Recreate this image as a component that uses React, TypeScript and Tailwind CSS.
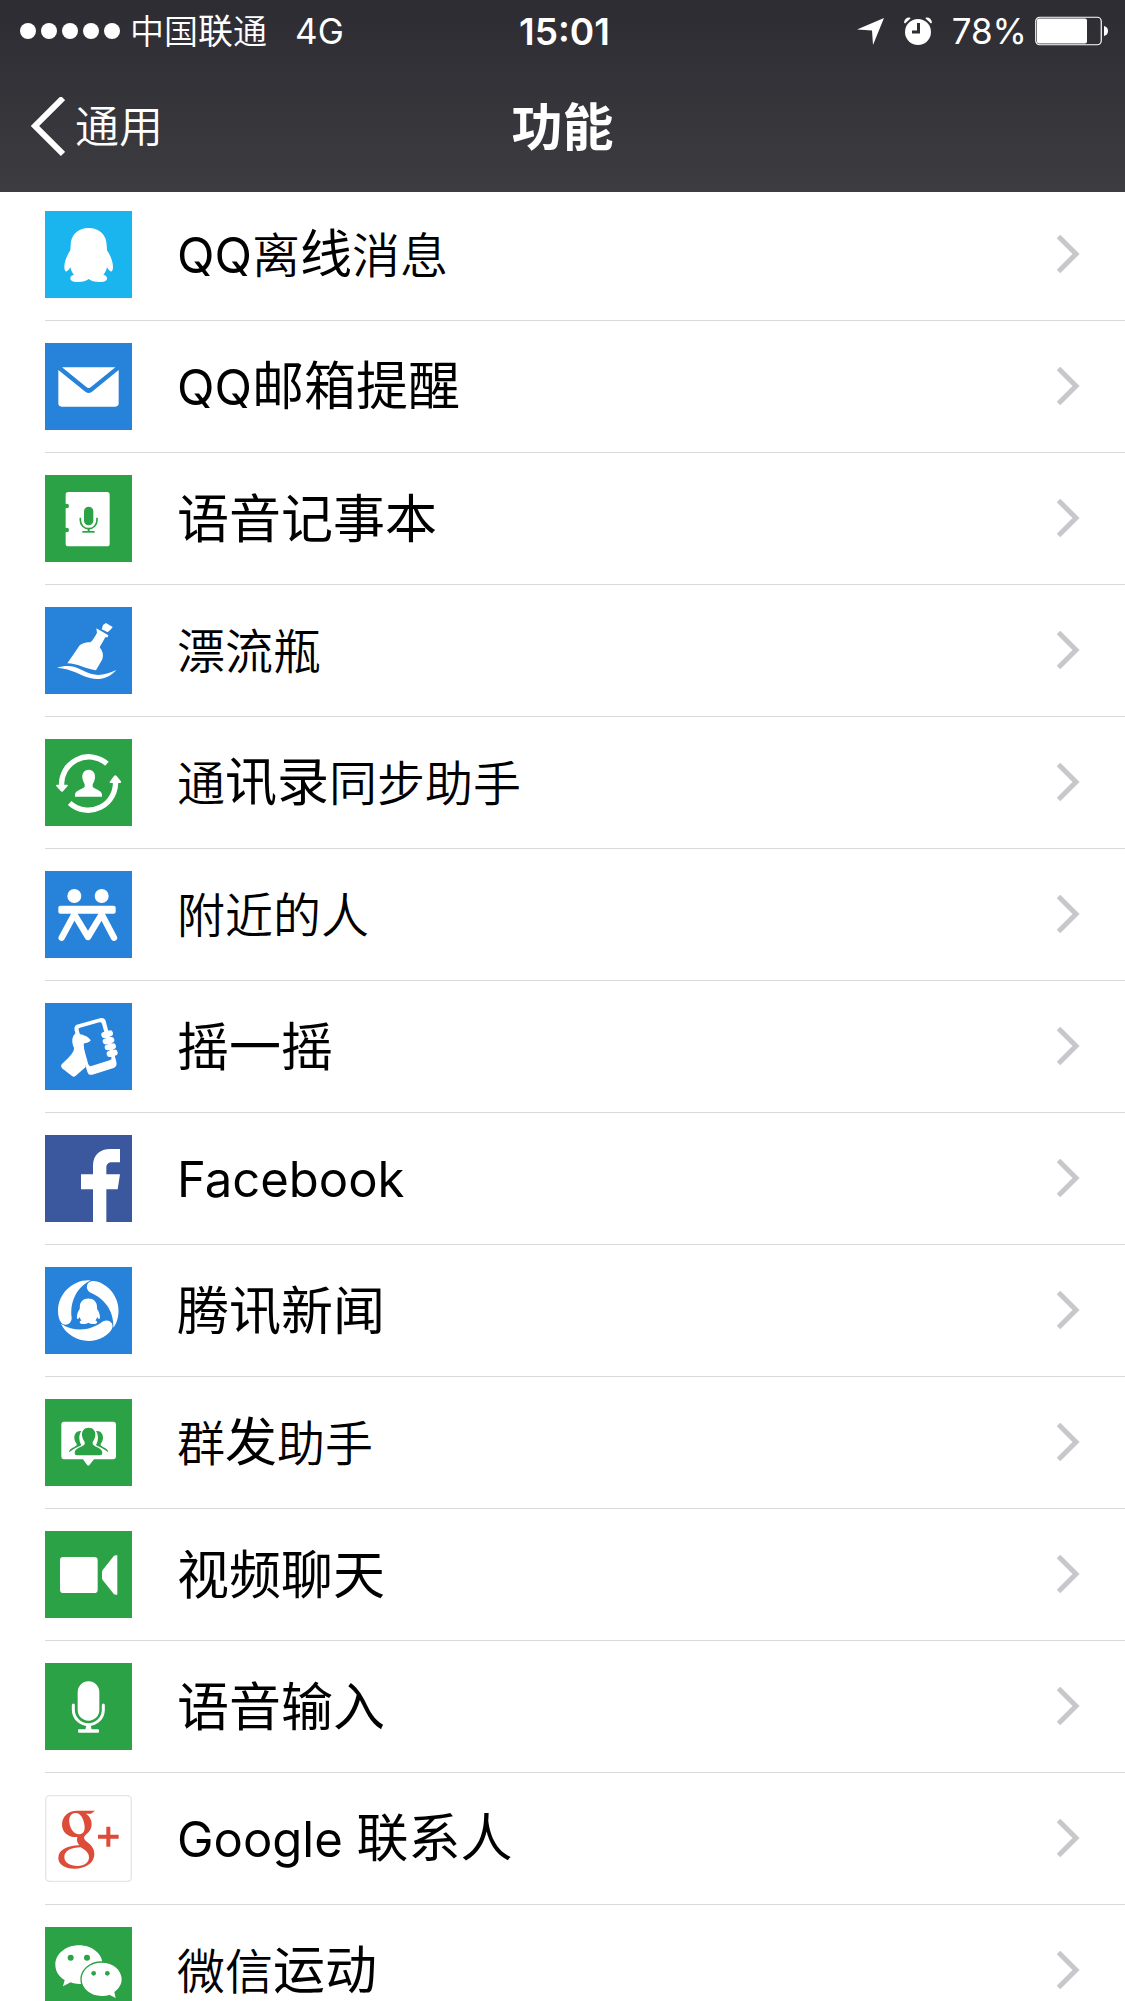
import React from 'react'
import { clsx } from 'clsx'

const BLUE = '#2782d9'
const GREEN = '#2ba245'

const PENGUIN =
  'M131 51C99 51 77 72 77 102L76 118C66 132 58 152 58 168C58 179 62 184 67 180C71 177 74 173 76 169C78 178 82 186 87 191C80 193 75 197 76 203C78 211 88 213 100 213C113 213 124 210 131 204C138 210 149 213 162 213C174 213 184 211 186 203C187 197 182 193 175 191C180 186 184 178 186 169C188 173 191 177 195 180C200 184 204 179 204 168C204 152 196 132 186 118L185 102C185 72 163 51 131 51Z'

const NEWS_BLADE = 'M137 40C86 36 39 78 39 131C39 148 43 160 49 167C57 178 80 174 80 152C75 112 88 66 137 40Z'

function Tile({ color, children }: { color: string; children: React.ReactNode }) {
  return (
    <svg viewBox="0 0 261 261" className="h-[87px] w-[87px] shrink-0" fill="#fff" aria-hidden="true">
      <rect width="261" height="261" fill={color} />
      {children}
    </svg>
  )
}

// Characters drawn a little smaller than the rest of the label
function Small({ children }: { children: React.ReactNode }) {
  return <span className="text-[48px] font-[350]">{children}</span>
}

function Latin({ children }: { children: React.ReactNode }) {
  return <span className="text-[49px]">{children}</span>
}

const features: { id: string; label: React.ReactNode; icon: React.ReactNode }[] = [
  {
    id: 'qq-offline',
    label: <><Latin>QQ</Latin><Small>离</Small>线<Small>消息</Small></>,
    icon: (
      <Tile color="#1ab4ef">
        <path d={PENGUIN} />
      </Tile>
    ),
  },
  {
    id: 'qq-mail',
    label: <><Latin>QQ</Latin>邮箱提醒</>,
    icon: (
      <Tile color={BLUE}>
        <path d="M51 73H211L138 132Q131 138 124 132Z" />
        <path d="M40 81L122 147Q131 153 140 147L221 81V181Q221 191 211 191H50Q40 191 40 181Z" />
      </Tile>
    ),
  },
  {
    id: 'voice-note',
    label: '语音记事本',
    icon: (
      <Tile color={GREEN}>
        <rect x="62" y="51" width="132" height="163" rx="8" />
        <g fill={GREEN}>
          <circle cx="65" cy="93" r="7" />
          <circle cx="65" cy="165" r="7" />
          <rect x="117" y="95" width="28" height="56" rx="14" />
          <rect x="128" y="160" width="6" height="11" />
          <rect x="112" y="168" width="37" height="5" />
        </g>
        <path d="M106 128V136A25 25 0 0 0 156 136V128" fill="none" stroke={GREEN} strokeWidth="5" />
      </Tile>
    ),
  },
  {
    id: 'bottle',
    label: <Small>漂流瓶</Small>,
    icon: (
      <Tile color={BLUE}>
        <path d="M183 48L203 60L198 67L188 76L170 67L174 54Z" />
        <path d="M154 64L190 85L188 91H181L164 121C174 133 176 145 172 157L153 190C120 186 98 169 67 169L99 122C106 110 118 106 136 106C143 100 150 89 156 77Z" />
        <path d="M36 182C64 173 88 176 112 190C150 211 178 206 214 189C196 211 165 221 138 214C108 207 82 185 36 182Z" />
      </Tile>
    ),
  },
  {
    id: 'contacts-sync',
    label: <><Small>通</Small>讯录<Small>同步助手</Small></>,
    icon: (
      <Tile color={GREEN}>
        <g fill="none" stroke="#fff" strokeWidth="16">
          <path d="M186 74A82 82 0 0 0 50 143" />
          <path d="M74 192A82 82 0 0 0 211 122" />
        </g>
        <path d="M36 137L66 137Q71 138 66 143L54 157Q51 160 48 157L34 142Q31 137 36 137Z" />
        <path d="M197 132Q191 131 196 126L207 111Q211 106 215 111L227 126Q231 131 225 132Z" />
        <path d="M131 92C117 92 111 103 112 116C113 125 117 131 119 136V143C112 152 91 153 90 166V173H171V166C170 153 150 152 143 143V136C146 131 149 125 150 116C151 103 145 92 131 92Z" />
      </Tile>
    ),
  },
  {
    id: 'nearby',
    label: <Small>附近的人</Small>,
    icon: (
      <Tile color={BLUE}>
        <circle cx="88" cy="75" r="21" />
        <circle cx="170" cy="75" r="21" />
        <rect x="40" y="104" width="172" height="24" rx="6" />
        <path d="M50 200L88 130L129 198L170 130L207 200" fill="none" stroke="#fff" strokeWidth="19" strokeLinecap="round" strokeLinejoin="round" />
      </Tile>
    ),
  },
  {
    id: 'shake',
    label: '摇一摇',
    icon: (
      <Tile color={BLUE}>
        <path d="M95 65L165 46Q178 43 182 54L214 176Q217 190 206 195L142 215Q131 218 127 206L89 83Q86 69 95 65Z" />
        <path d="M101 81Q99 75 105 74L163 58Q169 57 171 62L199 163Q201 170 194 172L139 189Q132 191 130 184Z" fill={BLUE} />
        <path d="M93 90C80 99 79 116 87 135C89 150 62 172 50 184Q45 190 51 196L82 220Q88 224 94 217L122 192L116 122C125 119 134 119 137 112C132 100 110 94 93 90Z" />
        <g fill="none" stroke="#fff" strokeWidth="18" strokeLinecap="round">
          <path d="M178 96L195 91" />
          <path d="M182 115L199 111" />
          <path d="M188 133L204 130" />
          <path d="M194 153L209 149" />
        </g>
      </Tile>
    ),
  },
  {
    id: 'facebook',
    label: <Latin>Facebook</Latin>,
    icon: (
      <Tile color="#3b579d">
        <path d="M144 261V163H108V118H144V92C144 60 165 42 196 42H225V82H201C190 82 184 88 184 98V118H225L218 163H184V261Z" />
      </Tile>
    ),
  },
  {
    id: 'tencent-news',
    label: '腾讯新闻',
    icon: (
      <Tile color={BLUE}>
        <path d={NEWS_BLADE} />
        <path d={NEWS_BLADE} transform="rotate(120 130 131)" />
        <path d={NEWS_BLADE} transform="rotate(240 130 131)" />
        <path d={PENGUIN} transform="translate(68 70) scale(0.475)" />
      </Tile>
    ),
  },
  {
    id: 'broadcast',
    label: <><Small>群</Small>发<Small>助手</Small></>,
    icon: (
      <Tile color={GREEN}>
        <path d="M57 68H204Q213 68 213 77V172Q213 181 204 181H147L134 197Q130 202 126 197L114 181H57Q49 181 49 172V77Q49 68 57 68Z" />
        <g fill={GREEN}>
          <path d="M109 96C96 94 88 103 88 116C88 124 92 130 95 134V139C89 146 72 148 72 160L82 153C90 146 106 142 109 138C101 124 101 108 109 96Z" />
          <path d="M153 96C166 94 174 103 174 116C174 124 170 130 167 134V139C173 146 190 148 190 160L180 153C172 146 156 142 153 138C161 124 161 108 153 96Z" />
          <path d="M131 86C117 86 110 96 111 109C112 119 116 125 119 129V136C112 146 89 146 89 162Q89 169 96 169H165Q172 169 172 162C172 146 150 146 143 136V129C146 125 150 119 151 109C152 96 145 86 131 86Z" />
        </g>
      </Tile>
    ),
  },
  {
    id: 'video-chat',
    label: '视频聊天',
    icon: (
      <Tile color={GREEN}>
        <rect x="45" y="78" width="113" height="108" rx="10" />
        <path d="M207 74Q211 72 217 73V191Q210 192 207 190L173 147Q171 144 171 140V124Q171 120 173 117Z" />
      </Tile>
    ),
  },
  {
    id: 'voice-input',
    label: '语音输入',
    icon: (
      <Tile color={GREEN}>
        <rect x="98" y="55" width="65" height="118" rx="32" />
        <path d="M85 126V140A45 45 0 0 0 175 140V126" fill="none" stroke="#fff" strokeWidth="9" strokeLinecap="round" />
        <path d="M124 187H137L140 200H121Z" />
        <rect x="99" y="199" width="63" height="10" rx="3" />
      </Tile>
    ),
  },
  {
    id: 'google-contacts',
    label: <><Latin>Google </Latin>联系人</>,
    icon: (
      <Tile color="#fff">
        <rect x="2" y="2" width="257" height="257" rx="12" fill="none" stroke="#e5e5e5" strokeWidth="4" />
        <g fill="#dd4b39" fillRule="evenodd">
          <path d="M96 47H150L138 56H123C134 63 140 74 140 87C140 105 129 113 121 121C115 127 116 132 122 137C134 146 148 157 148 177C148 203 124 221 88 221C60 221 40 209 40 189C40 165 66 152 103 151C97 144 94 136 97 126C69 128 51 111 51 89C51 65 69 47 96 47ZM91 54C78 55 71 66 73 82C75 103 88 119 103 118C117 117 121 105 118 88C115 68 105 53 91 54ZM107 157C78 157 58 168 58 186C58 202 74 213 98 213C119 213 132 203 132 187C132 173 120 165 107 157Z" />
          <path d="M184 95H196V119H221V131H196V155H184V131H159V119H184Z" />
        </g>
      </Tile>
    ),
  },
  {
    id: 'werun',
    label: <><Small>微信</Small>运动</>,
    icon: (
      <Tile color={GREEN}>
        <path d="M102 55C62 55 31 81 31 113C31 132 41 148 59 159L54 178L77 166C85 169 94 171 102 171C142 171 173 145 173 113C173 81 142 55 102 55Z" />
        <path d="M170 107C136 107 110 129 110 157C110 185 136 207 170 207C178 207 186 206 193 203L212 213L208 195C221 186 230 172 230 157C230 129 204 107 170 107Z" stroke={GREEN} strokeWidth="8" paintOrder="stroke" />
        <g fill={GREEN}>
          <circle cx="77" cy="92" r="9" />
          <circle cx="126" cy="92" r="9" />
          <circle cx="146" cy="139" r="7" />
          <circle cx="187" cy="139" r="7" />
        </g>
      </Tile>
    ),
  },
]

function StatusBar() {
  return (
    <div className="grid h-[62px] grid-cols-[1fr_auto_1fr] items-center pr-4 pl-5 text-[35px] leading-none">
      <div className="flex items-center">
        <div className="flex gap-[5px]">
          {[0, 1, 2, 3, 4].map((i) => (
            <span key={i} className="h-4 w-4 rounded-full bg-white" />
          ))}
        </div>
        <span className="ml-[10px]">
          <span className="text-[34px] font-[350]">中国</span>联<span className="text-[34px] font-[350]">通</span>
        </span>
        <span className="ml-7">4G</span>
      </div>
      <span className="text-[37px] font-semibold">15:01</span>
      <div className="flex items-center justify-end">
        <svg viewBox="0 0 27 27" className="mr-5 h-[27px] w-[27px]" fill="#fff" aria-hidden="true">
          <path d="M27 0L16 27L15 12.500L0 11.500Z" />
        </svg>
        <svg viewBox="0 0 28 28" className="mr-5 h-7 w-7" fill="#fff" aria-hidden="true">
          <circle cx="14" cy="15" r="13" />
          <path d="M0 5.500Q1 0 6 0.500L6.500 1.500L1 6.500Z" />
          <path d="M28 5.500Q27 0 22 0.500L21.500 1.500L27 6.500Z" />
          <path d="M14.500 6V15H8" fill="none" stroke="#2e2d33" strokeWidth="3" />
        </svg>
        <span>78%</span>
        <svg viewBox="0 0 74 30" className="ml-2 h-[30px] w-[74px]" fill="#fff" aria-hidden="true">
          <rect x="0.750" y="1.250" width="65.500" height="27.500" rx="4" fill="none" stroke="#fff" strokeWidth="1.200" />
          <rect x="2" y="2.500" width="50" height="25" rx="2" />
          <path d="M69 10Q73 11 73 15Q73 19 69 20Z" />
        </svg>
      </div>
    </div>
  )
}

export default function App() {
  return (
    <div className="flex h-screen flex-col overflow-hidden bg-white font-['Inter','Noto_Sans_CJK_SC',sans-serif] text-black">
      <header className="z-10 shrink-0 bg-gradient-to-b from-[#2d2c32] to-[#3d3c41] text-white">
        <StatusBar />
        <nav className="grid h-[130px] grid-cols-[1fr_auto_1fr] items-center px-[30px]">
          <a href="#general" className="flex items-center gap-[10px] justify-self-start text-[44px] leading-none font-[350]">
            <svg viewBox="0 0 35 60" className="h-[60px] w-[35px]" fill="none" stroke="#fff" strokeWidth="6" aria-hidden="true">
              <path d="M33 1L5 29L33 57" />
            </svg>
            通用
          </a>
          <h1 className="text-[51px] leading-none font-bold">功能</h1>
        </nav>
      </header>

      <main className="-mt-[3px] min-h-0 flex-1 overflow-y-auto [scrollbar-width:none]">
        <ul>
          {features.map((feature, i) => (
            <li
              key={feature.id}
              className={clsx('ml-[45px]', i < features.length - 1 && 'border-b border-[#d9d9d9]')}
            >
              <a href={`#${feature.id}`} className="flex h-[131px] items-center pr-[45px]">
                {feature.icon}
                <span className="ml-[45px] flex-1 pt-[2px] text-[52px] leading-[60px]">{feature.label}</span>
                <svg viewBox="0 0 24 40" className="h-10 w-6" fill="none" stroke="#c7c7cc" strokeWidth="5" aria-hidden="true">
                  <path d="M2.500 1.500L20 19L2.500 36.500" />
                </svg>
              </a>
            </li>
          ))}
        </ul>
      </main>
    </div>
  )
}
